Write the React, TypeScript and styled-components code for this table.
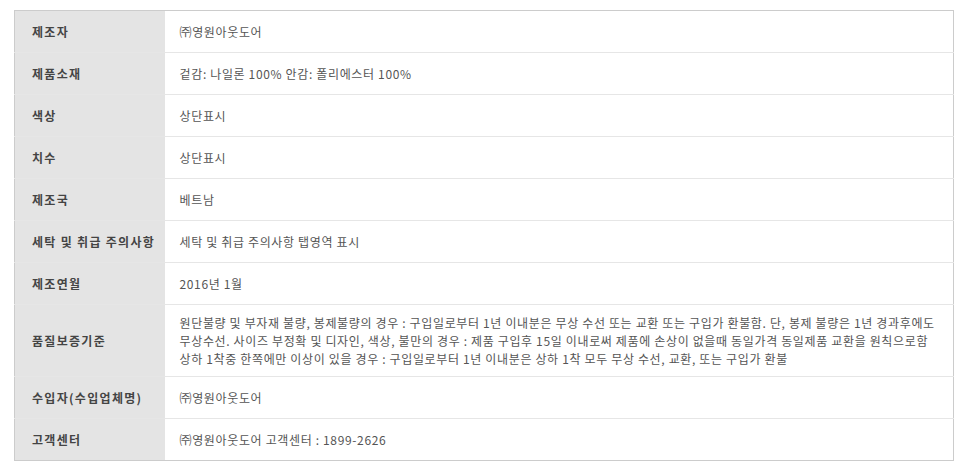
import React from 'react';
import styled, { createGlobalStyle } from 'styled-components';

const GlobalStyle = createGlobalStyle`
  body {
    margin: 0;
    background: #ffffff;
    font-family: "Noto Sans CJK KR", "Noto Sans", sans-serif;
  }
`;

const Wrapper = styled.div`
  padding: 10px 0 0 14px;
`;

const Table = styled.table`
  width: 940px;
  border-collapse: collapse;
  border: 1px solid #cccccc;
  table-layout: fixed;
`;

const Row = styled.tr`
  border-top: 1px solid #e6e6e6;

  &:first-child {
    border-top: none;
  }
`;

const Label = styled.th`
  width: 150px;
  background: #e4e4e4;
  color: #444444;
  font-size: 12px;
  font-weight: 700;
  text-align: left;
  padding: 0 0 0 17px;
  box-sizing: border-box;
  height: 41px;
  letter-spacing: 1.3px;
  white-space: nowrap;
`;

const Value = styled.td<{ tall?: boolean }>`
  color: #555555;
  font-size: 12px;
  line-height: 18px;
  padding: ${p => (p.tall ? '9px 10px 8px 15px' : '0 10px 0 15px')};
  height: 41px;
  letter-spacing: 0.65px;
`;

interface Item {
  label: string;
  value: string;
  tall?: boolean;
}

const items: Item[] = [
  { label: '제조자', value: '㈜영원아웃도어' },
  { label: '제품소재', value: '겉감: 나일론 100% 안감: 폴리에스터 100%' },
  { label: '색상', value: '상단표시' },
  { label: '치수', value: '상단표시' },
  { label: '제조국', value: '베트남' },
  { label: '세탁 및 취급 주의사항', value: '세탁 및 취급 주의사항 탭영역 표시' },
  { label: '제조연월', value: '2016년 1월' },
  {
    label: '품질보증기준',
    value:
      '원단불량 및 부자재 불량, 봉제불량의 경우 : 구입일로부터 1년 이내분은 무상 수선 또는 교환 또는 구입가 환불함. 단, 봉제 불량은 1년 경과후에도 무상수선. 사이즈 부정확 및 디자인, 색상, 불만의 경우 : 제품 구입후 15일 이내로써 제품에 손상이 없을때 동일가격 동일제품 교환을 원칙으로함 상하 1착중 한쪽에만 이상이 있을 경우 : 구입일로부터 1년 이내분은 상하 1착 모두 무상 수선, 교환, 또는 구입가 환불',
    tall: true,
  },
  { label: '수입자(수입업체명)', value: '㈜영원아웃도어' },
  { label: '고객센터', value: '㈜영원아웃도어 고객센터 : 1899-2626' },
];

const App: React.FC = () => {
  return (
    <>
      <GlobalStyle />
      <Wrapper>
        <Table>
          <tbody>
            {items.map(item => (
              <Row key={item.label}>
                <Label>{item.label}</Label>
                <Value tall={item.tall}>{item.value}</Value>
              </Row>
            ))}
          </tbody>
        </Table>
      </Wrapper>
    </>
  );
};

export default App;
